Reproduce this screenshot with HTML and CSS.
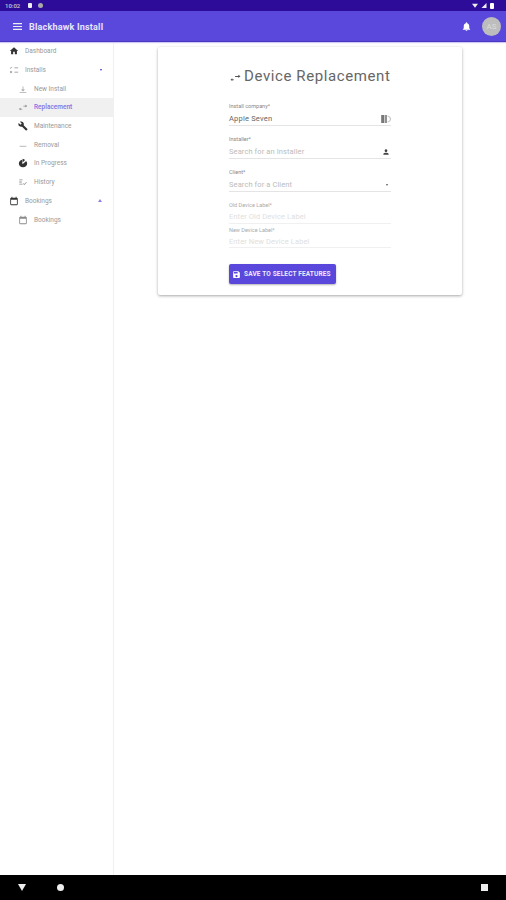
FILE: index.html
```html
<!DOCTYPE html>
<html lang="en">
<head>
    <meta charset="UTF-8">
    <meta name="viewport" content="width=device-width, initial-scale=1.0">
    <title>Blackhawk Install</title>
    <link rel="stylesheet" href="styles.css">
</head>
<body>
    <!-- Android status bar -->
    <div class="status-bar">
        <span class="clock">10:02</span>
        <span class="status-dot"></span>
        <span class="status-dot round"></span>
        <span class="spacer"></span>
        <svg class="status-icon" viewBox="0 0 8 6"><path d="M0 0.5h8L4 6z"/></svg>
        <svg class="status-icon" viewBox="0 0 6 6"><path d="M6 0v6H0z"/></svg>
        <span class="battery"></span>
    </div>

    <!-- App bar -->
    <header class="app-bar">
        <svg class="menu-icon" viewBox="0 0 9 7"><path d="M0 0h9v1.2H0zM0 2.9h9v1.2H0zM0 5.8h9V7H0z"/></svg>
        <span class="app-title">Blackhawk Install</span>
        <span class="spacer"></span>
        <svg class="bell" viewBox="0 0 24 24"><path d="M12 22c1.100 0 2-.9 2-2h-4c0 1.100.9 2 2 2zm6-6v-5c0-3.100-1.600-5.600-4.500-6.300V4c0-.8-.7-1.500-1.500-1.500s-1.500.7-1.500 1.500v.7C7.600 5.400 6 7.900 6 11v5l-2 2v1h16v-1z"/></svg>
        <span class="avatar">AS</span>
    </header>

    <div class="main">
        <!-- Side menu -->
        <aside class="sidebar">
            <a class="item">
                <svg class="icon dark" viewBox="0 0 24 24"><path d="M10 20v-6h4v6h5v-8h3L12 3 2 12h3v8z"/></svg>
                Dashboard
            </a>
            <a class="item">
                <svg class="icon" viewBox="0 0 24 24"><path d="M2 7l2 2 4-4-1-1-3 3-1-1zM13 6h9v2h-9zM2 15l2 2-2 2 1 1 2-2 2 2 1-1-2-2 2-2-1-1-2 2-2-2zM13 16h9v2h-9z"/></svg>
                Installs
                <span class="caret"></span>
            </a>
            <a class="item sub">
                <svg class="icon light" viewBox="0 0 24 24"><path d="M11 6h2v7h4l-5 5-5-5h4zM4 20h16v1.500H4z"/></svg>
                New Install
            </a>
            <a class="item sub active">
                <svg class="icon" viewBox="0 0 24 24"><path d="M2 17l4-3v2h4v2H6v2zM13 9h5V6l4 3.500-4 3.500v-2h-5z"/></svg>
                Replacement
            </a>
            <a class="item sub">
                <svg class="icon dark" viewBox="0 0 24 24"><path d="M22.700 19l-9.100-9.100c.9-2.300.4-5-1.500-6.900-2-2-5-2.400-7.400-1.300L9 6 6 9 1.600 4.700C.4 7.100.9 10.100 2.900 12.100c1.900 1.900 4.600 2.400 6.900 1.500l9.100 9.100c.4.400 1 .4 1.400 0l2.300-2.300c.5-.4.500-1.100.1-1.400z"/></svg>
                Maintenance
            </a>
            <a class="item sub">
                <svg class="icon light" viewBox="0 0 24 24"><path d="M4 14h16v2H4z"/></svg>
                Removal
            </a>
            <a class="item sub">
                <svg class="icon dark" viewBox="0 0 24 24"><path d="M11 2v9l6-6c-1.500-1.700-3.600-2.800-6-3zM13 13l6.500-6c1.500 1.600 2.500 3.700 2.500 6 0 5-4.500 9-10 9S2 18 2 13c0-4.500 3.500-8.300 8-9v10z"/></svg>
                In Progress
            </a>
            <a class="item sub">
                <svg class="icon" viewBox="0 0 24 24"><path d="M3 6h8v2H3zM3 11h6v2H3zM3 16h8v2H3zM13 15l2 2 5-5 1 1-6 6-3-3z"/></svg>
                History
            </a>
            <a class="item">
                <svg class="icon dark" viewBox="0 0 24 24"><path d="M19 4h-1V2h-2v2H8V2H6v2H5C3.900 4 3 4.900 3 6v14c0 1.100.9 2 2 2h14c1.100 0 2-.9 2-2V6c0-1.100-.9-2-2-2zm0 16H5V9h14z"/></svg>
                Bookings
                <span class="caret up"></span>
            </a>
            <a class="item sub">
                <svg class="icon" viewBox="0 0 24 24"><path d="M19 4h-1V2h-2v2H8V2H6v2H5C3.900 4 3 4.900 3 6v14c0 1.100.9 2 2 2h14c1.100 0 2-.9 2-2V6c0-1.100-.9-2-2-2zm0 16H5V9h14z"/></svg>
                Bookings
            </a>
        </aside>

        <!-- Form card -->
        <section class="content">
            <div class="card">
                <h1 class="card-title">
                    <svg class="title-icon" viewBox="0 0 24 24"><path d="M1 19l4-3v2h3v2H5v2zM11 11h7V8l5 3.500-5 3.500v-2h-7z"/></svg>
                    Device Replacement
                </h1>
                <form class="form">
                    <div class="field">
                        <label>Install company*</label>
                        <div class="value filled">Apple Seven
                            <svg class="field-icon" viewBox="0 0 12 10"><path d="M0 0h4v10H0zM5 0h2v10H5z"/><path d="M8 1.500c2.500 0 3.500 1.500 3.500 3.500S10.500 8.500 8 8.500" fill="none" stroke="#aaa"/></svg>
                        </div>
                    </div>
                    <div class="field">
                        <label>Installer*</label>
                        <div class="value">Search for an Installer
                            <svg class="field-icon dark" viewBox="0 0 24 24"><path d="M12 12c2.200 0 4-1.800 4-4s-1.800-4-4-4-4 1.800-4 4 1.800 4 4 4zm0 2c-2.700 0-8 1.300-8 4v2h16v-2c0-2.700-5.300-4-8-4z"/></svg>
                        </div>
                    </div>
                    <div class="field">
                        <label>Client*</label>
                        <div class="value">Search for a Client
                            <span class="select-arrow"></span>
                        </div>
                    </div>
                    <div class="field disabled">
                        <label>Old Device Label*</label>
                        <div class="value">Enter Old Device Label</div>
                    </div>
                    <div class="field disabled">
                        <label>New Device Label*</label>
                        <div class="value">Enter New Device Label</div>
                    </div>
                    <button type="button" class="save-btn">
                        <svg viewBox="0 0 24 24"><path d="M17 3H5C3.900 3 3 3.900 3 5v14c0 1.100.9 2 2 2h14c1.100 0 2-.9 2-2V7zm-5 16c-1.700 0-3-1.300-3-3s1.300-3 3-3 3 1.300 3 3-1.300 3-3 3zm3-10H5V5h10z"/></svg>
                        SAVE TO SELECT FEATURES
                    </button>
                </form>
            </div>
        </section>
    </div>

    <!-- Android nav bar -->
    <nav class="nav-bar">
        <span class="nav-back"></span>
        <span class="nav-home"></span>
        <span class="spacer"></span>
        <span class="nav-recent"></span>
    </nav>
</body>
</html>
```

FILE: styles.css
```css
* {
    box-sizing: border-box;
}
html, body {
    height: 100%;
}
body {
    font-family: Roboto, "Liberation Sans", sans-serif;
    margin: 0;
    padding: 0;
    overflow: hidden;
    display: flex;
    flex-direction: column;
    background: #fff;
    color: #777;
}
.spacer {
    flex: 1;
}

/* Status bar */
.status-bar {
    height: 11px;
    background: #2c0c98;
    display: flex;
    align-items: center;
    padding: 0 5px;
    gap: 3px;
    color: #ccc;
}
.clock {
    font-size: 6px;
    font-weight: 500;
    margin-right: 5px;
}
.status-dot {
    width: 4px;
    height: 5px;
    background: #eee;
    border-radius: 1px;
}
.status-dot.round {
    background: #aaa;
    border-radius: 50%;
    width: 5px;
    margin-left: 3px;
}
.status-icon {
    width: 6px;
    height: 5px;
    fill: #eee;
}
.battery {
    width: 4px;
    height: 6px;
    background: #fff;
    border-radius: 1px;
    margin-right: 7px;
}

/* App bar */
.app-bar {
    height: 31px;
    padding: 1px 13px 0;
    background: #5a47dc;
    border-bottom: 1px solid #4a38c0;
    box-shadow: 0 1px 1px #cfc9f3;
    display: flex;
    align-items: center;
    color: #fff;
    position: relative;
    z-index: 2;
}
.menu-icon {
    width: 9px;
    height: 7px;
    fill: #eee;
    margin-right: 7px;
}
.app-title {
    font-size: 9px;
    font-weight: 700;
    letter-spacing: 0.2px;
    color: #e8e6fa;
}
.bell {
    width: 11px;
    height: 11px;
    fill: #fff;
    margin-right: 10px;
}
.avatar {
    width: 19px;
    height: 19px;
    border-radius: 50%;
    background: #bdbdbd;
    color: #dcdcdc;
    font-size: 8px;
    display: flex;
    align-items: center;
    justify-content: center;
    margin-right: -8px;
}

/* Layout */
.main {
    flex: 1;
    display: flex;
    min-height: 0;
}
.sidebar {
    width: 114px;
    border-right: 1px solid #f0f0f0;
}
.item {
    height: 18.7px;
    display: flex;
    align-items: center;
    padding-left: 9px;
    font-size: 6.500px;
    color: #999;
    gap: 6px;
}
.item.sub {
    padding-left: 18px;
}
.item.active {
    background: #f0f0f0;
    color: #7f72e4;
    font-weight: 500;
}
.icon {
    width: 10px;
    height: 10px;
    fill: #8a8a8a;
    flex: none;
}
.icon.dark {
    fill: #333;
}
.icon.light {
    fill: #aaa;
}
.caret {
    width: 0;
    height: 0;
    border-left: 1.500px solid transparent;
    border-right: 1.500px solid transparent;
    border-top: 2.500px solid #3d2fc0;
    margin-left: auto;
    margin-right: 11px;
}
.caret.up {
    border-left-width: 2px;
    border-right-width: 2px;
    border-top: 0;
    border-bottom: 3px solid #8d80e6;
}

/* Card */
.content {
    flex: 1;
    padding: 5px 44px 0 44px;
}
.card {
    height: 248px;
    background: #fff;
    box-shadow: 0 1px 3px rgba(0, 0, 0, 0.35);
    border-radius: 2px;
    padding: 0 71px;
}
.card-title {
    margin: 0;
    padding-top: 5px;
    height: 53px;
    font-size: 15px;
    font-weight: 400;
    letter-spacing: 0.6px;
    color: #666;
    white-space: nowrap;
    display: flex;
    align-items: center;
    gap: 3px;
}
.title-icon {
    width: 11px;
    height: 11px;
    fill: #555;
    flex: none;
    margin-left: 1px;
}
.field {
    height: 33px;
    display: flex;
    flex-direction: column;
    padding-top: 3px;
}
.field label {
    font-size: 5.500px;
    color: #888;
    line-height: 7px;
}
.value {
    font-size: 7.500px;
    color: #bbb;
    letter-spacing: 0.1px;
    height: 14px;
    margin-top: 2px;
    border-bottom: 1px solid #e4e4e4;
    display: flex;
    align-items: center;
    justify-content: space-between;
}
.value.filled {
    color: #666;
    letter-spacing: 0.2px;
}
.field.disabled {
    height: 24.500px;
}
.field.disabled .value {
    color: #e0e0e0;
    border-bottom-color: #f0f0f0;
}
.field.disabled label {
    color: #aaa;
}
.field-icon {
    width: 10px;
    height: 8px;
    fill: #777;
}
.field-icon.dark {
    fill: #444;
}
.select-arrow {
    width: 0;
    height: 0;
    border-left: 1.500px solid transparent;
    border-right: 1.500px solid transparent;
    border-top: 2.500px solid #555;
    margin-right: 3px;
}
.save-btn {
    margin-top: 16px;
    width: 107px;
    height: 20px;
    padding: 0 0 0 3px;
    border: none;
    border-radius: 2px;
    background: #5a47dc;
    color: #eeeafc;
    font-family: inherit;
    font-size: 6.500px;
    font-weight: 700;
    letter-spacing: 0.15px;
    display: flex;
    align-items: center;
    gap: 3px;
    box-shadow: 0 1px 2px rgba(0, 0, 0, 0.3);
}
.save-btn svg {
    width: 9px;
    height: 9px;
    fill: #fff;
}

/* Nav bar */
.nav-bar {
    height: 25px;
    background: #000;
    display: flex;
    align-items: center;
    padding: 0 18px;
}
.nav-back {
    width: 0;
    height: 0;
    border-left: 4px solid transparent;
    border-right: 4px solid transparent;
    border-top: 7px solid #eee;
}
.nav-home {
    width: 7px;
    height: 7px;
    border-radius: 50%;
    background: #eee;
    margin-left: 31px;
}
.nav-recent {
    width: 7px;
    height: 7px;
    background: #eee;
}
```
